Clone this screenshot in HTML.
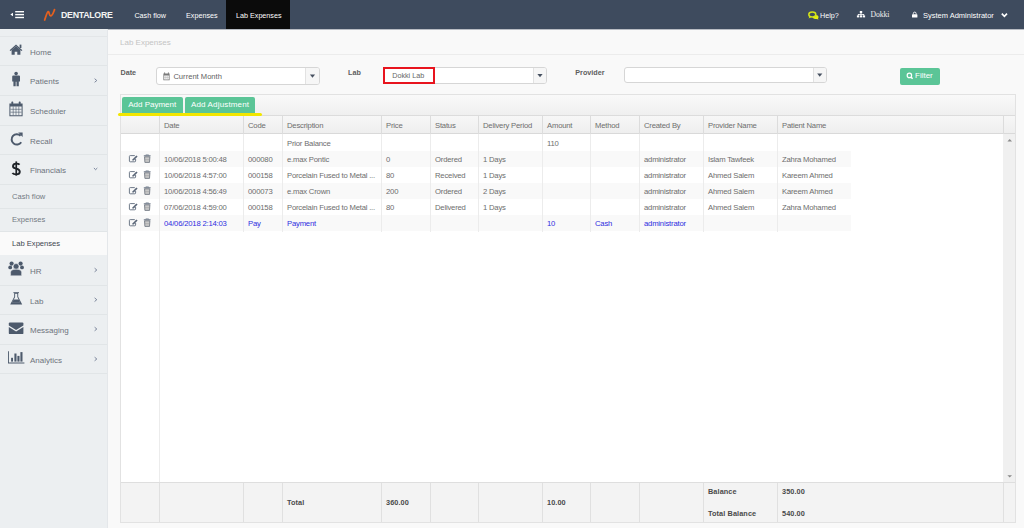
<!DOCTYPE html>
<html><head><meta charset="utf-8"><style>
*{box-sizing:border-box;margin:0;padding:0}
html,body{width:1024px;height:528px;overflow:hidden;background:#f9f9f9;font-family:"Liberation Sans",sans-serif;position:relative}
.a{position:absolute;white-space:nowrap;line-height:1}
svg{position:absolute;overflow:visible}
.nav{color:#fff;font-size:7.2px}
.mt{position:absolute;font-size:8px;color:#6c737c;line-height:1;white-space:nowrap}
.sub{position:absolute;font-size:7.6px;color:#737a83;line-height:1;white-space:nowrap}
.lbl{font-weight:bold;font-size:7.2px;color:#5e5e5e}
.btn{background:#5bc597;color:#fff;font-size:8px;border-radius:2px}
.th{font-size:7.7px;letter-spacing:-0.2px;color:#6d6d6d}
.td{font-size:7.7px;letter-spacing:-0.2px;color:#6d6d6d}
.tb{font-size:7.3px;color:#4a4a4a;font-weight:bold;letter-spacing:0.1px}
.blue{color:#2e2ee0}
</style></head><body>
<div class="a" style="left:0px;top:0px;width:1024px;height:29px;background:#3e4b5e"></div>
<svg style="left:0;top:0" width="40" height="29"><path d="M10.3 14.5 L13 12.8 L13 16.2 Z" fill="#fff"/><rect x="15.2" y="11" width="8.8" height="1.4" fill="#fff"/><rect x="15.2" y="13.9" width="8.8" height="1.4" fill="#fff"/><rect x="15.2" y="16.8" width="8.8" height="1.4" fill="#fff"/></svg>
<svg style="left:0;top:0" width="60" height="29"><path d="M44.7 20 C45.8 17 47 12 48.2 11.7 C49.3 11.4 49 15.8 50.6 15.9 C52.4 16 53.6 12 54.5 9.7" stroke="#e5601e" stroke-width="1.8" fill="none" stroke-linecap="round"/></svg>
<div class="a " style="left:61px;top:11px;font-size:8.8px;letter-spacing:-0.28px;font-weight:bold;color:#f4f4f4">DENTALORE</div>
<div class="a nav" style="left:134.4px;top:11.5px;">Cash flow</div>
<div class="a nav" style="left:186px;top:11.5px;">Expenses</div>
<div class="a" style="left:226px;top:0px;width:64px;height:29px;background:#0b0b0b"></div>
<div class="a" style="left:0px;top:29px;width:1024px;height:1px;background:rgba(62,75,94,0.35)"></div>
<div class="a nav" style="left:236px;top:11.5px;">Lab Expenses</div>
<svg style="left:0;top:0" width="1024" height="29"><path d="M812.6 16.6 Q815.4 14.2 817.8 15.6 Q819.4 17 818 18.4 L818.6 19.6 L816.4 18.9 Q813.6 19.6 812.6 17.6 Z" fill="#e4ee10"/><ellipse cx="812.3" cy="14.5" rx="3.5" ry="2.5" fill="#3e4b5e" stroke="#d2e21a" stroke-width="1.5"/><path d="M809.4 16.4 L808.6 18.4 L811.2 17.2 Z" fill="#d2e21a"/></svg>
<div class="a nav" style="left:820px;top:11.5px;">Help?</div>
<svg style="left:0;top:0" width="1024" height="29" fill="#fff"><rect x="859.8" y="11" width="2.4" height="2.2" /><rect x="860.6" y="13" width="0.8" height="1.4"/><rect x="857.9" y="14" width="6.2" height="0.8"/><rect x="857.9" y="14" width="0.7" height="1.6"/><rect x="860.6" y="14" width="0.8" height="1.6"/><rect x="863.4" y="14" width="0.7" height="1.6"/><rect x="856.9" y="15.4" width="2.3" height="2"/><rect x="859.85" y="15.4" width="2.3" height="2"/><rect x="862.8" y="15.4" width="2.3" height="2"/></svg>
<div class="a " style="left:870.6px;top:11.3px;font-family:'Liberation Serif',serif;font-size:7.7px;letter-spacing:-0.1px;color:#f2f2f2">Dokki</div>
<svg style="left:0;top:0" width="1024" height="29"><path d="M913.3 14.4 V13.6 A1.4 1.5 0 0 1 916.1 13.6 V14.4" fill="none" stroke="#fff" stroke-width="0.9"/><rect x="912" y="14.3" width="5.4" height="3.3" rx="0.4" fill="#fff"/></svg>
<div class="a nav" style="left:923px;top:11.6px;font-size:7.5px">System Administrator</div>
<svg style="left:0;top:0" width="1024" height="29"><path d="M1001.8 13.6 L1004.4 16.4 L1007 13.6" fill="none" stroke="#fff" stroke-width="1.6"/></svg>
<div class="a" style="left:0px;top:29px;width:108px;height:499px;background:#eceff1"></div>
<div class="a" style="left:107px;top:29px;width:1px;height:499px;background:#e4e7ea"></div>
<div class="a" style="left:0px;top:36px;width:107px;height:1px;background:#e3e6e8"></div>
<div class="a" style="left:0px;top:65px;width:107px;height:1px;background:#e1e5e7"></div>
<div class="a" style="left:0px;top:95px;width:107px;height:1px;background:#e1e5e7"></div>
<div class="a" style="left:0px;top:125px;width:107px;height:1px;background:#e1e5e7"></div>
<div class="a" style="left:0px;top:154px;width:107px;height:1px;background:#e1e5e7"></div>
<div class="a" style="left:0px;top:184px;width:107px;height:1px;background:#e1e5e7"></div>
<div class="a" style="left:0px;top:208px;width:107px;height:1px;background:#e1e5e7"></div>
<div class="a" style="left:0px;top:231px;width:107px;height:1px;background:#e1e5e7"></div>
<div class="a" style="left:0px;top:285px;width:107px;height:1px;background:#e1e5e7"></div>
<div class="a" style="left:0px;top:314px;width:107px;height:1px;background:#e1e5e7"></div>
<div class="a" style="left:0px;top:344px;width:107px;height:1px;background:#e1e5e7"></div>
<div class="a" style="left:0px;top:373px;width:107px;height:1px;background:#e1e5e7"></div>
<div class="a" style="left:0px;top:232px;width:107px;height:23px;background:#fafafa"></div>
<div class="a mt" style="left:30px;top:48.8px;">Home</div>
<div class="a mt" style="left:30px;top:78.3px;">Patients</div>
<div class="a mt" style="left:30px;top:108.3px;">Scheduler</div>
<div class="a mt" style="left:30px;top:137.8px;">Recall</div>
<div class="a mt" style="left:30px;top:167.3px;">Financials</div>
<div class="a mt" style="left:30px;top:268.3px;">HR</div>
<div class="a mt" style="left:30px;top:297.8px;">Lab</div>
<div class="a mt" style="left:30px;top:327.3px;">Messaging</div>
<div class="a mt" style="left:30px;top:356.8px;">Analytics</div>
<svg style="left:0;top:0" width="108" height="528"><path d="M94.6 78.7 L96.8 80.5 L94.6 82.3" fill="none" stroke="#6f7b92" stroke-width="0.9"/></svg>
<svg style="left:0;top:0" width="108" height="528"><path d="M94.6 268.2 L96.8 270 L94.6 271.8" fill="none" stroke="#6f7b92" stroke-width="0.9"/></svg>
<svg style="left:0;top:0" width="108" height="528"><path d="M94.6 297.9 L96.8 299.7 L94.6 301.5" fill="none" stroke="#6f7b92" stroke-width="0.9"/></svg>
<svg style="left:0;top:0" width="108" height="528"><path d="M94.6 327.2 L96.8 329 L94.6 330.8" fill="none" stroke="#6f7b92" stroke-width="0.9"/></svg>
<svg style="left:0;top:0" width="108" height="528"><path d="M94.6 357.2 L96.8 359 L94.6 360.8" fill="none" stroke="#6f7b92" stroke-width="0.9"/></svg>
<svg style="left:0;top:0" width="108" height="528"><path d="M93.9 168 L95.6 169.7 L97.3 168" fill="none" stroke="#6a7690" stroke-width="0.9"/></svg>
<div class="a sub" style="left:12px;top:192.6px;color:#737a83">Cash flow</div>
<div class="a sub" style="left:12px;top:216.1px;color:#737a83">Expenses</div>
<div class="a sub" style="left:12px;top:239.6px;color:#3f4650">Lab Expenses</div>
<svg style="left:0;top:0" width="108" height="528" fill="#4d5a6c"><path d="M9.6 50.2 L16 44.4 L22.4 50.2 L21.4 51 L16 46.2 L10.6 51 Z"/><rect x="19.6" y="44.6" width="1.8" height="3.4"/><path d="M11.6 50 L16 46.2 L20.4 50 V54.8 H17.3 V51.8 H14.7 V54.8 H11.6 Z"/><circle cx="16.1" cy="73.6" r="1.8"/><path d="M12.2 76.6 Q12.2 75.6 13.2 75.6 H19 Q20 75.6 20 76.6 V81.6 H18.8 V86.2 H16.5 V81.8 H15.7 V86.2 H13.4 V81.6 H12.2 Z"/><path d="M9.4 103.6 H22.6 V116.2 H9.4 Z M10.4 106.4 V115.2 H21.6 V106.4 Z" fill-rule="evenodd"/><rect x="11.4" y="101.6" width="1.8" height="3.4" rx="0.6"/><rect x="18.8" y="101.6" width="1.8" height="3.4" rx="0.6"/><g fill="none" stroke="#4d5a6c" stroke-width="0.6"><path d="M13.2 106.4 V115.2 M16 106.4 V115.2 M18.8 106.4 V115.2 M10.4 109.3 H21.6 M10.4 112.2 H21.6"/></g></svg>
<svg style="left:0;top:0" width="108" height="528"><path d="M20.6 135.8 A5.2 5.2 0 1 0 21.2 142.2" fill="none" stroke="#4d5a6c" stroke-width="2"/><path d="M18.2 132.6 L22.6 132.6 L22.6 137 Z" fill="#4d5a6c"/></svg>
<svg style="left:0;top:0" width="108" height="528"><path d="M19.6 164.6 Q18.6 163.6 16.2 163.6 Q13 163.6 13 166.2 Q13 168 16.2 168.6 Q19.8 169.4 19.8 171.8 Q19.8 174.4 16.2 174.4 Q13.4 174.4 12.4 173" fill="none" stroke="#1f2328" stroke-width="1.9"/><rect x="15.4" y="161.4" width="1.7" height="14.2" fill="#1f2328"/></svg>
<svg style="left:0;top:0" width="108" height="528" fill="#4d5a6c"><circle cx="11.6" cy="263.6" r="2.1"/><circle cx="20.6" cy="263.6" r="2.1"/><circle cx="10.2" cy="267.4" r="1.9"/><circle cx="22" cy="267.4" r="1.9"/><circle cx="16.1" cy="266.4" r="2.9" stroke="#eceff1" stroke-width="0.6"/><path d="M10.6 275.4 V272.6 Q10.6 269.3 16.1 269.3 Q21.6 269.3 21.6 272.6 V275.4 Q21.6 275.8 21 275.8 H11.2 Q10.6 275.8 10.6 275.4 Z" stroke="#eceff1" stroke-width="0.5"/><rect x="13.4" y="292.2" width="5.6" height="0.9"/><path d="M14.2 293 H18.2 V296.8 L22.2 304.4 H10.2 L14.2 296.8 Z M15.1 293.8 V297.1 L12.2 302.6 H20.2 L17.3 297.1 V293.8 Z" fill-rule="evenodd"/><path d="M12 302.8 L13.6 299.6 H18.8 L20.4 302.8 Z"/><path d="M8.8 323.6 Q8.8 322.6 9.8 322.6 H22.4 Q23.4 322.6 23.4 323.6 V325.6 L16.1 330 L8.8 325.6 Z"/><path d="M8.8 327 L16.1 331.4 L23.4 327 V333.2 Q23.4 334.1 22.4 334.1 H9.8 Q8.8 334.1 8.8 333.2 Z"/><path d="M8 351.2 H8.9 V362.5 H24.4 V363.4 H8 Z"/><rect x="11.1" y="357.8" width="1.9" height="3.8"/><rect x="14.4" y="353.5" width="2.1" height="8.1"/><rect x="17.4" y="355.9" width="2.1" height="5.7"/><rect x="20.4" y="352.1" width="2.1" height="9.5"/></svg>
<div class="a " style="left:120px;top:39px;font-size:8px;color:#c4c4c4">Lab Expenses</div>
<div class="a" style="left:108px;top:54px;width:916px;height:1px;background:#ececec"></div>
<div class="a lbl" style="left:120.5px;top:69.3px;">Date</div>
<div class="a lbl" style="left:348px;top:69px;">Lab</div>
<div class="a lbl" style="left:575.3px;top:69px;">Provider</div>
<div class="a" style="left:156px;top:67px;width:164px;height:18px;background:#fff;border:1px solid #d6d6d6;border-radius:3px"></div>
<div class="a" style="left:305px;top:68px;width:14px;height:16px;background:#f6f6f6;border-left:1px solid #e2e2e2;border-radius:0 2px 2px 0"></div>
<svg style="left:0;top:0" width="1024" height="100"><path d="M309.9 74.6 H315.1 L312.5 77.8 Z" fill="#465060"/></svg>
<div class="a" style="left:383px;top:67px;width:164px;height:17px;background:#fff;border:1px solid #d6d6d6;border-radius:3px"></div>
<div class="a" style="left:533px;top:68px;width:13px;height:15px;background:#f6f6f6;border-left:1px solid #e2e2e2;border-radius:0 2px 2px 0"></div>
<svg style="left:0;top:0" width="1024" height="100"><path d="M537.4 74.1 H542.6 L540.0 77.3 Z" fill="#465060"/></svg>
<div class="a" style="left:624px;top:67px;width:203px;height:16px;background:#fff;border:1px solid #d6d6d6;border-radius:3px"></div>
<div class="a" style="left:812.5px;top:68px;width:13.5px;height:14px;background:#f6f6f6;border-left:1px solid #e2e2e2;border-radius:0 2px 2px 0"></div>
<svg style="left:0;top:0" width="1024" height="100"><path d="M817.15 73.6 H822.35 L819.75 76.8 Z" fill="#465060"/></svg>
<svg style="left:0;top:0" width="1024" height="100" fill="#7a7a7a"><path d="M163.4 73.4 H169.6 V80.2 H163.4 Z M164.2 75.4 V79.4 H168.8 V75.4 Z" fill-rule="evenodd"/><rect x="164.2" y="72.4" width="0.9" height="1.6"/><rect x="167.9" y="72.4" width="0.9" height="1.6"/><g stroke="#aaa" stroke-width="0.5"><path d="M165.8 75.4 V79.4 M167.3 75.4 V79.4 M164.2 77.4 H168.8"/></g></svg>
<div class="a " style="left:173.4px;top:73px;font-size:7.6px;color:#5f5f5f">Current Month</div>
<div class="a" style="left:382.8px;top:67px;width:52.0px;height:17.200000000000003px;border:2.8px solid #e8141e"></div>
<div class="a " style="left:392.2px;top:72.3px;font-size:7.2px;color:#666">Dokki Lab</div>
<div class="a" style="left:900px;top:68px;width:40px;height:17px;background:#5bc597;border-radius:2px"></div>
<svg style="left:0;top:0" width="1024" height="100"><circle cx="909.4" cy="75.4" r="2.2" fill="none" stroke="#fff" stroke-width="1.2"/><path d="M910.9 77 L912.6 78.8" stroke="#fff" stroke-width="1.5"/></svg>
<div class="a " style="left:915px;top:72.2px;font-size:8px;color:#fff">Filter</div>
<div class="a" style="left:120px;top:94px;width:896px;height:429px;background:#fff;border:1px solid #e2e2e2"></div>
<div class="a" style="left:121px;top:95px;width:894px;height:21px;background:linear-gradient(#f9f9f9,#efefef);border-bottom:1px solid #dcdcdc"></div>
<div class="a" style="left:122px;top:96.5px;width:61px;height:16.5px;background:#5bc597;border-radius:2px 2px 0 0"></div>
<div class="a" style="left:184.5px;top:96.5px;width:70.5px;height:16.5px;background:#5bc597;border-radius:2px 2px 0 0"></div>
<div class="a " style="left:128.2px;top:101.4px;font-size:8px;color:#fff">Add Payment</div>
<div class="a " style="left:191px;top:101.4px;font-size:8px;letter-spacing:0.15px;color:#fff">Add Adjustment</div>
<div class="a" style="left:118px;top:113px;width:144px;height:3px;background:#f2e600;border-radius:1.5px"></div>
<div class="a" style="left:121px;top:116px;width:894px;height:18px;background:linear-gradient(#f7f7f7,#eeeeee);border-bottom:1px solid #d9d9d9"></div>
<div class="a" style="left:159px;top:116px;width:1px;height:18px;background:#dcdcdc"></div>
<div class="a" style="left:243px;top:116px;width:1px;height:18px;background:#dcdcdc"></div>
<div class="a" style="left:282px;top:116px;width:1px;height:18px;background:#dcdcdc"></div>
<div class="a" style="left:381px;top:116px;width:1px;height:18px;background:#dcdcdc"></div>
<div class="a" style="left:430px;top:116px;width:1px;height:18px;background:#dcdcdc"></div>
<div class="a" style="left:478px;top:116px;width:1px;height:18px;background:#dcdcdc"></div>
<div class="a" style="left:542px;top:116px;width:1px;height:18px;background:#dcdcdc"></div>
<div class="a" style="left:590px;top:116px;width:1px;height:18px;background:#dcdcdc"></div>
<div class="a" style="left:639px;top:116px;width:1px;height:18px;background:#dcdcdc"></div>
<div class="a" style="left:703px;top:116px;width:1px;height:18px;background:#dcdcdc"></div>
<div class="a" style="left:777px;top:116px;width:1px;height:18px;background:#dcdcdc"></div>
<div class="a" style="left:1003px;top:116px;width:1px;height:18px;background:#dcdcdc"></div>
<div class="a th" style="left:164px;top:122px;">Date</div>
<div class="a th" style="left:248px;top:122px;">Code</div>
<div class="a th" style="left:287px;top:122px;">Description</div>
<div class="a th" style="left:386px;top:122px;">Price</div>
<div class="a th" style="left:435px;top:122px;">Status</div>
<div class="a th" style="left:483px;top:122px;">Delivery Period</div>
<div class="a th" style="left:547px;top:122px;">Amount</div>
<div class="a th" style="left:595px;top:122px;">Method</div>
<div class="a th" style="left:644px;top:122px;">Created By</div>
<div class="a th" style="left:708px;top:122px;">Provider Name</div>
<div class="a th" style="left:782px;top:122px;">Patient Name</div>
<div class="a" style="left:121px;top:150.7px;width:730px;height:16.099999999999994px;background:#f9f9f9"></div>
<div class="a" style="left:121px;top:182.9px;width:730px;height:16.099999999999994px;background:#f9f9f9"></div>
<div class="a" style="left:121px;top:215.1px;width:730px;height:16.099999999999994px;background:#f9f9f9"></div>
<div class="a" style="left:159px;top:134px;width:1px;height:97.5px;background:#ececec"></div>
<div class="a" style="left:243px;top:134px;width:1px;height:97.5px;background:#ececec"></div>
<div class="a" style="left:282px;top:134px;width:1px;height:97.5px;background:#ececec"></div>
<div class="a" style="left:381px;top:134px;width:1px;height:97.5px;background:#ececec"></div>
<div class="a" style="left:430px;top:134px;width:1px;height:97.5px;background:#ececec"></div>
<div class="a" style="left:478px;top:134px;width:1px;height:97.5px;background:#ececec"></div>
<div class="a" style="left:542px;top:134px;width:1px;height:97.5px;background:#ececec"></div>
<div class="a" style="left:590px;top:134px;width:1px;height:97.5px;background:#ececec"></div>
<div class="a" style="left:639px;top:134px;width:1px;height:97.5px;background:#ececec"></div>
<div class="a" style="left:703px;top:134px;width:1px;height:97.5px;background:#ececec"></div>
<div class="a" style="left:777px;top:134px;width:1px;height:97.5px;background:#ececec"></div>
<div class="a" style="left:159px;top:231px;width:1px;height:251px;background:#ececec"></div>
<div class="a td" style="left:287px;top:140.0px;">Prior Balance</div>
<div class="a td" style="left:547px;top:140.0px;">110</div>
<svg style="left:0;top:0" width="200" height="240"><path d="M134.8 155.6 H130.2 Q129.4 155.6 129.4 156.4 V161.0 Q129.4 161.79999999999998 130.2 161.79999999999998 H134.8 Q135.6 161.79999999999998 135.6 161.0 V159.0" fill="none" stroke="#6f7a89" stroke-width="1"/><path d="M132.2 160.6 L132.6 159.2 L136.4 155.4 L137.6 156.6 L133.8 160.4 Z" fill="#5a6678"/><path d="M143.8 155.79999999999998 H150.6" stroke="#6f7a89" stroke-width="1.1"/><path d="M145.8 155.4 V154.9 H148.6 V155.4" fill="none" stroke="#6f7a89" stroke-width="0.8"/><path d="M144.5 156.79999999999998 H149.9 L149.5 162.4 H144.9 Z" fill="#b4b4b4" stroke="#777e88" stroke-width="0.9"/><path d="M145.4 158.2 H149 M145.4 161.0 H149" stroke="#e8e8e8" stroke-width="0.6"/></svg>
<div class="a td" style="left:164px;top:156.0px;">10/06/2018 5:00:48</div>
<div class="a td" style="left:248px;top:156.0px;">000080</div>
<div class="a td" style="left:287px;top:156.0px;">e.max Pontic</div>
<div class="a td" style="left:386px;top:156.0px;">0</div>
<div class="a td" style="left:435px;top:156.0px;">Ordered</div>
<div class="a td" style="left:483px;top:156.0px;">1 Days</div>
<div class="a td" style="left:644px;top:156.0px;">administrator</div>
<div class="a td" style="left:708px;top:156.0px;">Islam Tawfeek</div>
<div class="a td" style="left:782px;top:156.0px;">Zahra Mohamed</div>
<svg style="left:0;top:0" width="200" height="240"><path d="M134.8 171.6 H130.2 Q129.4 171.6 129.4 172.4 V177.0 Q129.4 177.79999999999998 130.2 177.79999999999998 H134.8 Q135.6 177.79999999999998 135.6 177.0 V175.0" fill="none" stroke="#6f7a89" stroke-width="1"/><path d="M132.2 176.6 L132.6 175.2 L136.4 171.4 L137.6 172.6 L133.8 176.4 Z" fill="#5a6678"/><path d="M143.8 171.79999999999998 H150.6" stroke="#6f7a89" stroke-width="1.1"/><path d="M145.8 171.4 V170.9 H148.6 V171.4" fill="none" stroke="#6f7a89" stroke-width="0.8"/><path d="M144.5 172.79999999999998 H149.9 L149.5 178.4 H144.9 Z" fill="#b4b4b4" stroke="#777e88" stroke-width="0.9"/><path d="M145.4 174.2 H149 M145.4 177.0 H149" stroke="#e8e8e8" stroke-width="0.6"/></svg>
<div class="a td" style="left:164px;top:172.0px;">10/06/2018 4:57:00</div>
<div class="a td" style="left:248px;top:172.0px;">000158</div>
<div class="a td" style="left:287px;top:172.0px;">Porcelain Fused to Metal ...</div>
<div class="a td" style="left:386px;top:172.0px;">80</div>
<div class="a td" style="left:435px;top:172.0px;">Received</div>
<div class="a td" style="left:483px;top:172.0px;">1 Days</div>
<div class="a td" style="left:644px;top:172.0px;">administrator</div>
<div class="a td" style="left:708px;top:172.0px;">Ahmed Salem</div>
<div class="a td" style="left:782px;top:172.0px;">Kareem Ahmed</div>
<svg style="left:0;top:0" width="200" height="240"><path d="M134.8 187.6 H130.2 Q129.4 187.6 129.4 188.4 V193.0 Q129.4 193.79999999999998 130.2 193.79999999999998 H134.8 Q135.6 193.79999999999998 135.6 193.0 V191.0" fill="none" stroke="#6f7a89" stroke-width="1"/><path d="M132.2 192.6 L132.6 191.2 L136.4 187.4 L137.6 188.6 L133.8 192.4 Z" fill="#5a6678"/><path d="M143.8 187.79999999999998 H150.6" stroke="#6f7a89" stroke-width="1.1"/><path d="M145.8 187.4 V186.9 H148.6 V187.4" fill="none" stroke="#6f7a89" stroke-width="0.8"/><path d="M144.5 188.79999999999998 H149.9 L149.5 194.4 H144.9 Z" fill="#b4b4b4" stroke="#777e88" stroke-width="0.9"/><path d="M145.4 190.2 H149 M145.4 193.0 H149" stroke="#e8e8e8" stroke-width="0.6"/></svg>
<div class="a td" style="left:164px;top:188.0px;">10/06/2018 4:56:49</div>
<div class="a td" style="left:248px;top:188.0px;">000073</div>
<div class="a td" style="left:287px;top:188.0px;">e.max Crown</div>
<div class="a td" style="left:386px;top:188.0px;">200</div>
<div class="a td" style="left:435px;top:188.0px;">Ordered</div>
<div class="a td" style="left:483px;top:188.0px;">2 Days</div>
<div class="a td" style="left:644px;top:188.0px;">administrator</div>
<div class="a td" style="left:708px;top:188.0px;">Ahmed Salem</div>
<div class="a td" style="left:782px;top:188.0px;">Kareem Ahmed</div>
<svg style="left:0;top:0" width="200" height="240"><path d="M134.8 203.6 H130.2 Q129.4 203.6 129.4 204.4 V209.0 Q129.4 209.79999999999998 130.2 209.79999999999998 H134.8 Q135.6 209.79999999999998 135.6 209.0 V207.0" fill="none" stroke="#6f7a89" stroke-width="1"/><path d="M132.2 208.6 L132.6 207.2 L136.4 203.4 L137.6 204.6 L133.8 208.4 Z" fill="#5a6678"/><path d="M143.8 203.79999999999998 H150.6" stroke="#6f7a89" stroke-width="1.1"/><path d="M145.8 203.4 V202.9 H148.6 V203.4" fill="none" stroke="#6f7a89" stroke-width="0.8"/><path d="M144.5 204.79999999999998 H149.9 L149.5 210.4 H144.9 Z" fill="#b4b4b4" stroke="#777e88" stroke-width="0.9"/><path d="M145.4 206.2 H149 M145.4 209.0 H149" stroke="#e8e8e8" stroke-width="0.6"/></svg>
<div class="a td" style="left:164px;top:204.0px;">07/06/2018 4:59:00</div>
<div class="a td" style="left:248px;top:204.0px;">000158</div>
<div class="a td" style="left:287px;top:204.0px;">Porcelain Fused to Metal ...</div>
<div class="a td" style="left:386px;top:204.0px;">80</div>
<div class="a td" style="left:435px;top:204.0px;">Delivered</div>
<div class="a td" style="left:483px;top:204.0px;">1 Days</div>
<div class="a td" style="left:644px;top:204.0px;">administrator</div>
<div class="a td" style="left:708px;top:204.0px;">Ahmed Salem</div>
<div class="a td" style="left:782px;top:204.0px;">Zahra Mohamed</div>
<svg style="left:0;top:0" width="200" height="240"><path d="M134.8 219.6 H130.2 Q129.4 219.6 129.4 220.4 V225.0 Q129.4 225.79999999999998 130.2 225.79999999999998 H134.8 Q135.6 225.79999999999998 135.6 225.0 V223.0" fill="none" stroke="#6f7a89" stroke-width="1"/><path d="M132.2 224.6 L132.6 223.2 L136.4 219.4 L137.6 220.6 L133.8 224.4 Z" fill="#5a6678"/><path d="M143.8 219.79999999999998 H150.6" stroke="#6f7a89" stroke-width="1.1"/><path d="M145.8 219.4 V218.9 H148.6 V219.4" fill="none" stroke="#6f7a89" stroke-width="0.8"/><path d="M144.5 220.79999999999998 H149.9 L149.5 226.4 H144.9 Z" fill="#b4b4b4" stroke="#777e88" stroke-width="0.9"/><path d="M145.4 222.2 H149 M145.4 225.0 H149" stroke="#e8e8e8" stroke-width="0.6"/></svg>
<div class="a td blue" style="left:164px;top:220.0px;">04/06/2018 2:14:03</div>
<div class="a td blue" style="left:248px;top:220.0px;">Pay</div>
<div class="a td blue" style="left:287px;top:220.0px;">Payment</div>
<div class="a td blue" style="left:547px;top:220.0px;">10</div>
<div class="a td blue" style="left:595px;top:220.0px;">Cash</div>
<div class="a td blue" style="left:644px;top:220.0px;">administrator</div>
<div class="a" style="left:1003px;top:134px;width:12px;height:348px;background:#f0f0f0"></div>
<svg style="left:0;top:0" width="1024" height="528" fill="#8a8a8a"><path d="M1007.4 141.4 H1012 L1009.7 139 Z"/><path d="M1007.4 475.2 H1012 L1009.7 477.6 Z"/></svg>
<div class="a" style="left:121px;top:482px;width:894px;height:40px;background:#f3f3f3;border-top:1px solid #dedede"></div>
<div class="a" style="left:159px;top:483px;width:1px;height:39px;background:#e0e0e0"></div>
<div class="a" style="left:243px;top:483px;width:1px;height:39px;background:#e0e0e0"></div>
<div class="a" style="left:282px;top:483px;width:1px;height:39px;background:#e0e0e0"></div>
<div class="a" style="left:381px;top:483px;width:1px;height:39px;background:#e0e0e0"></div>
<div class="a" style="left:430px;top:483px;width:1px;height:39px;background:#e0e0e0"></div>
<div class="a" style="left:478px;top:483px;width:1px;height:39px;background:#e0e0e0"></div>
<div class="a" style="left:542px;top:483px;width:1px;height:39px;background:#e0e0e0"></div>
<div class="a" style="left:590px;top:483px;width:1px;height:39px;background:#e0e0e0"></div>
<div class="a" style="left:639px;top:483px;width:1px;height:39px;background:#e0e0e0"></div>
<div class="a" style="left:703px;top:483px;width:1px;height:39px;background:#e0e0e0"></div>
<div class="a" style="left:777px;top:483px;width:1px;height:39px;background:#e0e0e0"></div>
<div class="a" style="left:1003px;top:483px;width:1px;height:39px;background:#e0e0e0"></div>
<div class="a tb" style="left:287px;top:499.2px;">Total</div>
<div class="a tb" style="left:386px;top:499.2px;">360.00</div>
<div class="a tb" style="left:547px;top:499.2px;">10.00</div>
<div class="a tb" style="left:708px;top:487.8px;">Balance</div>
<div class="a tb" style="left:782px;top:487.8px;">350.00</div>
<div class="a tb" style="left:708px;top:510.2px;">Total Balance</div>
<div class="a tb" style="left:782px;top:510.2px;">540.00</div>
</body></html>
